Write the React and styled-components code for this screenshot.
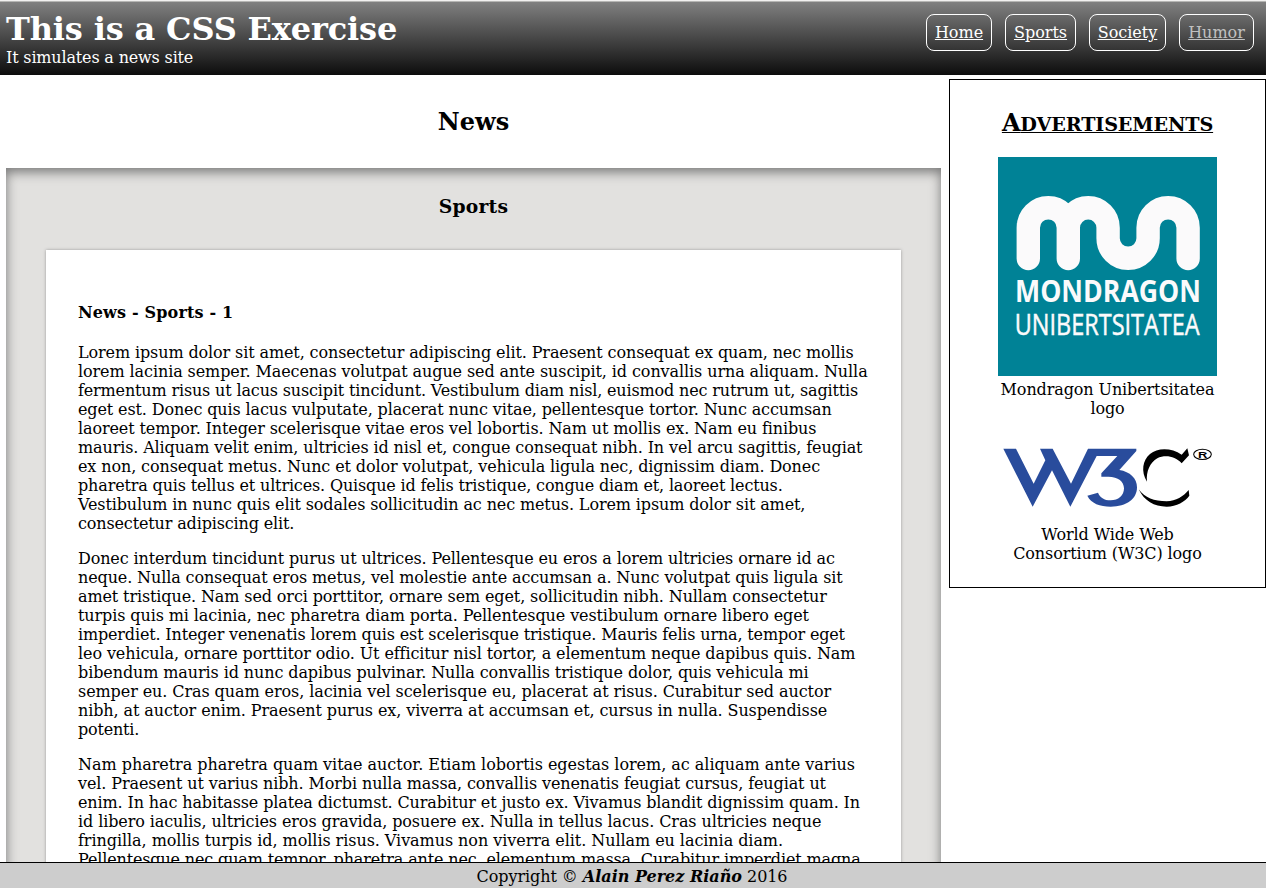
import React from "react";
import styled, { createGlobalStyle } from "styled-components";

const GlobalStyle = createGlobalStyle`
  * { box-sizing: border-box; }
  body {
    margin: 0;
    background: #fff;
    color: #000;
    font: 16px/19px "DejaVu Serif", serif;
  }
`;

const Page = styled.div`
  display: flex;
  flex-direction: column;
  height: 888px;
  overflow: hidden;
`;

const Header = styled.header`
  flex: none;
  display: flex;
  justify-content: space-between;
  align-items: flex-start;
  height: 75px;
  padding: 9px 12px 0 6px;
  border-top: 1px solid #f2f1f0;
  background: linear-gradient(#b6b6b4 1px, #808080 1px, #0c0c0c);
  color: #fff;
`;

const SiteTitle = styled.h1`
  margin: 0;
  font-size: 32px;
  line-height: 38px;
  letter-spacing: -0.15px;
  white-space: nowrap;
`;

const Tagline = styled.p`
  margin: 0;
  letter-spacing: -0.165px;
`;

const Nav = styled.nav`
  display: flex;
  gap: 13px;
  padding-top: 4px;
`;

const NavLink = styled.a`
  width: ${(p) => p.$width}px;
  padding: 8px 0;
  border: 1px solid #fff;
  border-radius: 8px;
  color: ${(p) => (p.$dim ? "#c0c0c0" : "#fff")};
  text-align: center;
  text-decoration: underline;
`;

const Content = styled.div`
  flex: 1;
  min-height: 0;
  display: grid;
  grid-template-columns: 935px 317px;
  column-gap: 8px;
  padding-left: 6px;
  align-items: start;
  overflow: hidden;
`;

const Main = styled.main`
  padding-top: 32px;
`;

const NewsTitle = styled.h2`
  margin: 0 0 32px;
  font-size: 24px;
  line-height: 29px;
  text-align: center;
`;

const Section = styled.section`
  height: 1100px;
  padding: 27px 40px 40px;
  background: #e2e1df;
  box-shadow: inset 0 4px 12px #777;
`;

const SectionTitle = styled.h3`
  margin: 0 0 32px;
  font-size: 18.72px;
  line-height: 23px;
  letter-spacing: 0.25px;
  text-align: center;
`;

const Article = styled.article`
  height: 1000px;
  padding: 53px 32px 32px;
  background: #fff;
  box-shadow: 0 0 3px #999;
`;

const ArticleTitle = styled.h4`
  margin: 0 0 21px;
  letter-spacing: 0.16px;
`;

const Paragraph = styled.p`
  margin: 0 0 16px;
`;

const Line = styled.span`
  display: block;
  white-space: nowrap;
  letter-spacing: ${(p) => p.$tracking}px;
`;

const Aside = styled.aside`
  display: flex;
  flex-direction: column;
  align-items: center;
  height: 509px;
  margin-top: 4px;
  padding-top: 28px;
  border: 1px solid #000;
`;

const AsideTitle = styled.h2`
  height: 29px;
  margin: 0 0 20px;
  font-size: 24px;
  line-height: 29px;
  letter-spacing: -0.15px;
  text-decoration: underline;
  text-decoration-thickness: 1px;
`;

const SmallCaps = styled.span`
  font-size: 19.2px;
  line-height: 1;
  text-transform: uppercase;
`;

const Figure = styled.figure`
  width: 219px;
  margin: 0 0 ${(p) => p.$gap || 0}px;
  text-align: center;
  svg { display: block; }
`;

const Caption = styled.figcaption`
  margin-top: ${(p) => p.$gap}px;
  letter-spacing: -0.11px;
`;

const Footer = styled.footer`
  flex: none;
  height: 26px;
  padding: 4px 2px 0 0;
  border-top: 1px solid #000;
  background: #cdcdcd;
  letter-spacing: -0.07px;
  text-align: center;
`;

const Author = styled.strong`
  font-style: italic;
  letter-spacing: 0;
`;

const paragraphs = [
  [
    ["Lorem ipsum dolor sit amet, consectetur adipiscing elit. Praesent consequat ex quam, nec mollis", -0.113],
    ["lorem lacinia semper. Maecenas volutpat augue sed ante suscipit, id convallis urna aliquam. Nulla", -0.093],
    ["fermentum risus ut lacus suscipit tincidunt. Vestibulum diam nisl, euismod nec rutrum ut, sagittis", -0.153],
    ["eget est. Donec quis lacus vulputate, placerat nunc vitae, pellentesque tortor. Nunc accumsan", -0.129],
    ["laoreet tempor. Integer scelerisque vitae eros vel lobortis. Nam ut mollis ex. Nam eu finibus", -0.113],
    ["mauris. Aliquam velit enim, ultricies id nisl et, congue consequat nibh. In vel arcu sagittis, feugiat", -0.127],
    ["ex non, consequat metus. Nunc et dolor volutpat, vehicula ligula nec, dignissim diam. Donec", -0.115],
    ["pharetra quis tellus et ultrices. Quisque id felis tristique, congue diam et, laoreet lectus.", -0.15],
    ["Vestibulum in nunc quis elit sodales sollicitudin ac nec metus. Lorem ipsum dolor sit amet,", -0.121],
    ["consectetur adipiscing elit.", -0.143],
  ],
  [
    ["Donec interdum tincidunt purus ut ultrices. Pellentesque eu eros a lorem ultricies ornare id ac", -0.134],
    ["neque. Nulla consequat eros metus, vel molestie ante accumsan a. Nunc volutpat quis ligula sit", -0.12],
    ["amet tristique. Nam sed orci porttitor, ornare sem eget, sollicitudin nibh. Nullam consectetur", -0.117],
    ["turpis quis mi lacinia, nec pharetra diam porta. Pellentesque vestibulum ornare libero eget", -0.103],
    ["imperdiet. Integer venenatis lorem quis est scelerisque tristique. Mauris felis urna, tempor eget", -0.158],
    ["leo vehicula, ornare porttitor odio. Ut efficitur nisl tortor, a elementum neque dapibus quis. Nam", -0.102],
    ["bibendum mauris id nunc dapibus pulvinar. Nulla convallis tristique dolor, quis vehicula mi", -0.1],
    ["semper eu. Cras quam eros, lacinia vel scelerisque eu, placerat at risus. Curabitur sed auctor", -0.085],
    ["nibh, at auctor enim. Praesent purus ex, viverra at accumsan et, cursus in nulla. Suspendisse", -0.103],
    ["potenti.", -0.2],
  ],
  [
    ["Nam pharetra pharetra quam vitae auctor. Etiam lobortis egestas lorem, ac aliquam ante varius", -0.032],
    ["vel. Praesent ut varius nibh. Morbi nulla massa, convallis venenatis feugiat cursus, feugiat ut", -0.105],
    ["enim. In hac habitasse platea dictumst. Curabitur et justo ex. Vivamus blandit dignissim quam. In", -0.124],
    ["id libero iaculis, ultricies eros gravida, posuere ex. Nulla in tellus lacus. Cras ultricies neque", -0.097],
    ["fringilla, mollis turpis id, mollis risus. Vivamus non viverra elit. Nullam eu lacinia diam.", -0.06],
    ["Pellentesque nec quam tempor, pharetra ante nec, elementum massa. Curabitur imperdiet magna", -0.145],
  ],
];

const MondragonLogo = () => (
  <svg width="219" height="219" viewBox="0 0 219 219">
    <rect width="219" height="219" fill="#008296" />
    <path
      d="M30.3 101.5V70.7a20 20 0 0 1 40 0V101.5M70.3 70.7a19.9 19.9 0 0 1 39.8 0V81.3a20 20 0 0 0 40 0V70.7a20 20 0 0 1 40 0V101.5"
      fill="none"
      stroke="#fbfafb"
      strokeWidth="23.4"
      strokeLinecap="round"
    />
    <g fill="#fbfafb" fontFamily="'Open Sans', sans-serif">
      <text x="17" y="145.3" fontSize="30.3" fontWeight="700" textLength="186" lengthAdjust="spacingAndGlyphs">
        MONDRAGON
      </text>
      <text x="16.7" y="178.3" fontSize="30" fontWeight="400" stroke="#fbfafb" strokeWidth="0.5" textLength="185" lengthAdjust="spacingAndGlyphs">
        UNIBERTSITATEA
      </text>
    </g>
  </svg>
);

const W3CLogo = () => (
  <svg width="219" height="66" viewBox="24 195 657 198">
    <path
      fill="#294c9c"
      d="M40 206H78L131 311L166 241L150 206H188L243 311L294 206H439V213L388 270C420 275 441 295 441 322C441 357 410 380 362 380C330 380 303 370 292 347L324 338C330 352 342 361 362 361C385 361 402 347 402 325C402 305 385 290 355 290H334V280L382 228H320L241 380L186 271L128 380Z"
    />
    <path d="M471 305C452 275 458 240 480 222C503 202 545 203 575 224L592 205L597 226L575 250C555 228 525 224 502 235C480 247 468 275 471 305Z" />
    <path d="M446 328C465 354 492 364 530 364C558 362 580 350 596 330L598 347C585 365 560 379 530 380C492 380 463 363 446 328Z" />
    <ellipse cx="637.5" cy="223" rx="26.5" ry="15.5" fill="none" stroke="#000" strokeWidth="3.2" />
    <text x="624" y="232.5" fontFamily="'Liberation Sans', sans-serif" fontWeight="700" fontSize="27" textLength="28" lengthAdjust="spacingAndGlyphs">
      R
    </text>
  </svg>
);

export default function App() {
  return (
    <Page>
      <GlobalStyle />
      <Header>
        <div>
          <SiteTitle>This is a CSS Exercise</SiteTitle>
          <Tagline>It simulates a news site</Tagline>
        </div>
        <Nav>
          <NavLink $width={66}>Home</NavLink>
          <NavLink $width={71}>Sports</NavLink>
          <NavLink $width={77}>Society</NavLink>
          <NavLink $width={75} $dim>Humor</NavLink>
        </Nav>
      </Header>
      <Content>
        <Main>
          <NewsTitle>News</NewsTitle>
          <Section>
            <SectionTitle>Sports</SectionTitle>
            <Article>
              <ArticleTitle>News - Sports - 1</ArticleTitle>
              {paragraphs.map((lines, i) => (
                <Paragraph key={i}>
                  {lines.map(([text, tracking]) => (
                    <Line key={text} $tracking={tracking}>{text}</Line>
                  ))}
                </Paragraph>
              ))}
            </Article>
          </Section>
        </Main>
        <Aside>
          <AsideTitle>A<SmallCaps>dvertisements</SmallCaps></AsideTitle>
          <Figure $gap={27}>
            <MondragonLogo />
            <Caption $gap={4}>Mondragon Unibertsitatea logo</Caption>
          </Figure>
          <Figure>
            <W3CLogo />
            <Caption $gap={14}>World Wide Web Consortium (W3C) logo</Caption>
          </Figure>
        </Aside>
      </Content>
      <Footer>
        Copyright © <Author>Alain Perez Riaño</Author> 2016
      </Footer>
    </Page>
  );
}
